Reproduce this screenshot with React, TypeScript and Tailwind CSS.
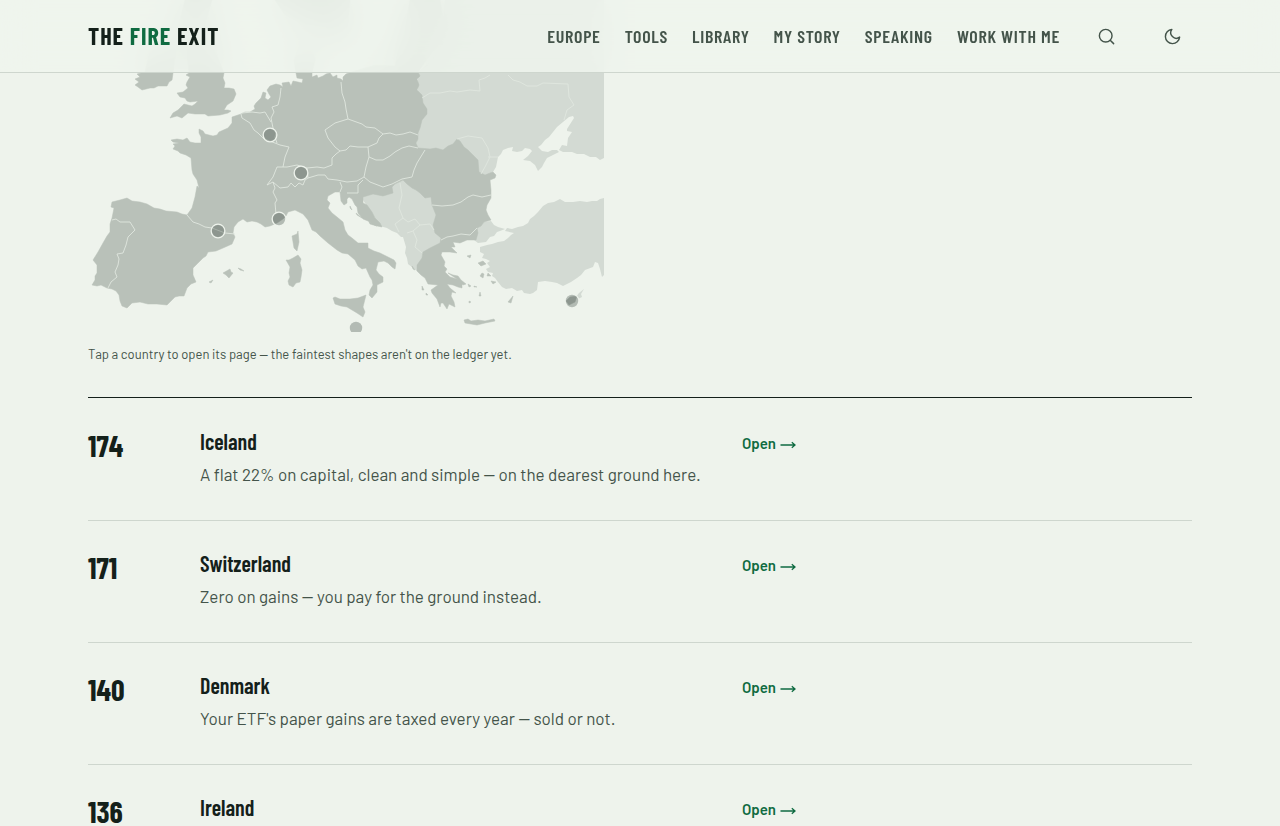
import { useState } from "react";
import { Search } from "lucide-react";

const navLinks = ["Europe", "Tools", "Library", "My story", "Speaking", "Work with me"];

const countries: { score: number; name: string; note?: string }[] = [
  { score: 174, name: "Iceland", note: "A flat 22% on capital, clean and simple — on the dearest ground here." },
  { score: 171, name: "Switzerland", note: "Zero on gains — you pay for the ground instead." },
  { score: 140, name: "Denmark", note: "Your ETF's paper gains are taxed every year — sold or not." },
  { score: 136, name: "Ireland" },
];

// countries that are not on the ledger
const faintLand = [
  "M418 73 440 50 445 0H604V158L600 160 596 157 590 157 584 154 577 154 572 152 568 152 563 152 559 150 562 145 567 146 568 138 572 132 567 131 567 129 574 118 573 116 569 117 563 122 557 127 553 132 549 137 545 140 541 145 538 147 542 151 548 152 552 150 557 150 559 152 553 155 547 158 544 163 542 167 538 171 535 165 530 161 523 160 528 156 532 151 530 149 525 148 522 151 517 152 512 151 513 147 508 148 503 150 501 154 498 157 496 167 493 172 480 178 416 153Z",
  "M358 197 363 200 380 226 387 228 392 231 397 233 401 237 403 237 406 247 405 253 407 258 408 264 412 267 417 271 425 262 445 245 445 200 405 178 385 190Z",
  "M484 222 491 221 494 225 498 227 505 229 500 231 497 232 494 236 490 237 486 242 478 243 474 240 476 225Z",
  "M480 247 487 245 492 244 498 242 504 241 508 238 511 235 514 233 505 231 507 228 512 229 518 227 523 226 528 223 530 219 534 216 538 212 543 206 548 203 554 202 560 199 565 202 573 202 580 201 587 202 592 201 597 201 600 199 604 198V275L602 277 600 269 598 263 595 262 593 267 585 270 581 275 577 278 571 282 563 286 557 283 552 282 545 281 538 282 537 290 533 293 530 294 524 293 522 290 517 291 512 288 506 289 502 287 498 282 495 278 492 276 493 273 488 272 486 269 490 267 487 263 490 261 486 259 482 258 484 254 480 252Z",
  "M576 297 579 293 584 289 581 294 582 297 578 299Z",
];

const land = [
  // mainland, clockwise from Brittany
  "M171 140 177 139 183 140 187 138 190 142 195 143 201 143 201 137 199 133 199 129 203 131 205 134 213 136 217 135 219 132 228 128 232 123 232 117 241 114 245 112 250 112 255 109 254 106 256 103 261 98 263 92 266 93 265 98 268 100 271 97 269 94 267 90 270 86 276 84 280 85 283 87 282 83 289 82 291 86 293 81 298 82 302 83 303 79 297 78 296 73 294 60 300 45 312 40 315 60 312 73 312 77 317 75 318 78 323 76 326 74 330 73 333 77 337 75 337 78 341 79 343 81 343 77 346 74 355 71 375 65 395 66 398 50 405 30 410 0 440 0 445 30 430 55 418 72 420 76 417 79 419 85 417 90 422 95 423 103 427 109 427 114 422 120 420 128 418 133 418 139 416 143 418 148 430 149 436 148 443 150 448 146 453 144 457 139 460 141 464 147 468 150 473 155 478 160 479 172 485 175 490 173 493 172 496 175 495 178 490 180 491 190 491 198 487 205 486 210 488 215 491 220 484 222 481 226 477 228 478 233 476 240 467 240 460 243 453 242 455 247 451 247 457 253 450 252 442 252 441 255 445 262 444 266 447 269 445 272 450 277 457 279 462 282 462 288 458 287 453 285 447 284 450 288 456 293 452 292 451 296 454 302 455 307 449 304 447 309 443 303 441 303 440 307 437 299 432 293 431 290 438 285 428 284 425 278 421 275 417 271 417 265 422 258 423 252 430 248 440 243 441 238 435 233 433 225 436 215 434 210 432 205 431 197 425 198 420 193 416 190 412 188 407 184 403 180 399 182 395 184 392 187 393 193 383 196 373 194 363 197 363 203 367 205 372 212 375 218 380 223 382 227 377 226 372 224 368 221 363 219 358 213 357 207 355 205 352 199 349 197 347 199 347 203 344 205 341 201 340 192 335 192 328 196 327 200 330 203 328 208 332 213 337 217 343 222 345 230 348 235 352 238 358 243 368 243 368 248 374 251 380 253 390 258 394 260 396 263 395 269 392 267 388 263 384 261 378 262 376 270 379 274 383 277 383 282 377 285 377 292 372 298 369 295 370 290 373 285 372 280 370 277 366 268 362 269 358 266 355 260 348 254 342 253 337 250 328 243 320 236 316 232 312 230 308 220 303 214 295 210 288 212 286 216 283 219 277 223 270 226 265 227 261 224 257 222 252 221 247 222 243 219 238 222 234 227 233 233 235 237 232 244 223 248 216 251 208 252 206 256 203 258 198 263 193 268 193 275 196 282 191 284 187 288 184 296 179 296 175 297 171 301 167 305 157 304 148 304 140 302 132 303 127 308 122 306 120 301 119 295 116 291 112 289 107 288 101 285 97 286 92 285 95 280 95 276 97 273 97 265 93 260 98 252 103 243 107 236 110 232 110 224 112 218 114 208 111 207 112 202 120 200 127 198 132 201 140 202 147 204 154 208 160 209 166 211 177 212 182 214 187 215 192 208 195 197 197 186 199 188 197 180 193 174 192 170 191 158 186 155 180 153 178 151 173 149 175 146 173 144 179 143 173 142Z",
  "M173 73 172 80 169 82 167 86 158 86 154 88 150 88 142 90 138 87 135 85 139 82 135 79 140 77 137 74 145 72 150 50 163 40 176 50Z",
  "M189 73 186 75 190 77 187 82 186 85 188 88 183 92 177 93 180 97 185 98 187 101 190 102 198 101 195 104 192 106 184 104 178 110 173 113 170 118 177 116 182 118 188 113 195 114 205 114 208 116 220 115 228 113 231 111 228 110 224 110 227 105 233 101 236 94 234 89 229 88 224 88 225 83 223 78 224 73 215 50 205 25 212 0 185 0 180 20 186 45Z",
  "M275 0H350L348 25 342 45 335 40 325 25 305 25 285 15Z",
  "M333 298 335 297 340 299 350 299 358 298 366 295 363 307 365 312 363 317 357 313 347 307 341 306 335 304Z",
  "M286 260 289 260 293 258 298 255 301 259 300 263 302 270 301 277 300 282 296 283 293 287 289 285 288 281 290 277 289 273 290 267Z",
  "M292 236 297 234 298 231 299 242 297 251 294 248Z",
  "M223 273 230 269 231 272 233 273 229 278 226 275ZM238 268 241 269 244 271 240 270ZM209 282 213 280 211 283Z",
  "M464 320 468 319 471 321 478 320 485 321 494 319 495 321 485 323 477 325 465 323Z",
  "M448 273 453 275 458 276 461 280 466 284 463 285 457 279Z",
  "M478 263 483 261 486 264 481 266ZM482 273 484 274 483 278 480 276ZM491 281 496 282 493 284ZM508 302 513 296 511 303ZM467 256 471 255 470 258ZM488 273 491 276 487 276ZM412 266 415 270 413 269ZM422 286 424 290 422 290ZM426 293 428 295 426 295ZM468 284 471 286 469 287ZM474 286 477 287 474 287ZM480 292 481 296 479 296ZM469 301 471 302 469 303Z",
  "M566 301 570 297 577 296 575 302 569 305Z",
  "M350 206 352 210 350 208ZM356 213 362 218 357 215ZM369 222 377 226 370 224Z",
];

const borders = [
  "M112 220 116 219 120 222 130 222 135 230 128 237 126 245 123 253 117 254 119 259 118 265 115 272 117 277 111 282 108 288",
  "M187 215 193 222 199 224 205 227 212 228 225 233 235 234",
  "M241 114 242 118 250 123 254 130 258 133 260 135 264 139 275 143 280 145 289 147 285 157 283 167",
  "M242 113 252 112 260 113 265 112 268 117 271 122",
  "M281 88 280 97 278 105 272 107 274 112 271 118 273 128 276 133 275 137 277 143",
  "M341 82 342 93 345 102 346 109 348 119 335 123 325 130 328 138 335 147 340 151 346 150 350 146 358 147 368 147 377 143 379 138 383 134 375 128 366 127 362 124 348 119",
  "M383 134 390 133 396 135 403 134 410 132 418 135M368 147 369 157 376 160 383 160 390 156 395 152 402 148 409 146 418 148",
  "M369 157 366 167 364 177 370 182 383 187 392 184 402 179 412 177 414 170 417 163 425 150",
  "M340 151 336 154 332 158 332 165 324 168 317 167 307 168 308 178 318 175 325 175 328 179 337 180 347 182 357 181 364 177",
  "M273 177 277 167 287 167 297 165 307 168M308 178 305 180 303 185 299 183 295 187 291 183 288 187 280 188 273 182 267 185 273 177M273 182 275 188 273 192 277 200 275 203 276 214",
  "M340 182 342 187 340 192M363 180 358 185 358 193 347 193",
  "M432 205 442 206 453 205 461 202 468 197 473 195 482 197 491 195",
  "M441 240 447 237 453 236 461 234 470 235 477 228",
  "M422 98 430 93 440 93 450 91 457 92 470 90 480 91 479 80 485 78 490 75 M508 75 513 80 520 82 527 86 537 86 543 83 568 84 569 97 574 105 567 110 564 120",
  "M457 139 468 136 482 138 488 148 490 157 485 167 481 174M488 157 498 157",
  "M400 183 402 195 399 208 403 218 395 224 399 232M403 218 408 222 415 219 420 225 413 231 407 233M420 225 430 224 434 230M413 231 417 240 415 247 422 253",
];

const dots = [
  { name: "Luxembourg", cx: 270, cy: 135 },
  { name: "Liechtenstein", cx: 301, cy: 173 },
  { name: "Andorra", cx: 218, cy: 231 },
  { name: "Monaco", cx: 279, cy: 219 },
  { name: "Malta", cx: 356, cy: 328 },
  { name: "Cyprus", cx: 572, cy: 301 },
];

function EuropeMap() {
  return (
    <svg viewBox="88 0 516 332" className="block w-full max-w-[516px]" role="img" aria-label="Map of Europe">
      <g fill="#d3dad3">
        {faintLand.map((d) => (
          <path key={d} d={d} />
        ))}
      </g>
      <g fill="#b9c1b9" stroke="#b9c1b9" strokeWidth="0.5" strokeLinejoin="round">
        {land.map((d) => (
          <path key={d} d={d} />
        ))}
      </g>
      <g fill="none" stroke="#e0e7df" strokeWidth="0.9" strokeLinejoin="round">
        {borders.map((d) => (
          <path key={d} d={d} />
        ))}
      </g>
      {dots.map((dot) => (
        <g key={dot.name}>
          <circle cx={dot.cx} cy={dot.cy} r="6.8" fill="none" stroke="#eef3ec" strokeWidth="1.4" />
          <circle cx={dot.cx} cy={dot.cy} r="6.2" fill="#16241c" fillOpacity="0.27" />
        </g>
      ))}
    </svg>
  );
}

function MoonIcon() {
  return (
    <svg width="19" height="19" viewBox="0 0 24 24" fill="none" stroke="currentColor" strokeWidth="1.8" strokeLinecap="round" strokeLinejoin="round">
      <path d="M21 12.79A9 9 0 1 1 11.21 3 7 7 0 0 0 21 12.79z" />
    </svg>
  );
}

function ArrowIcon() {
  return (
    <svg width="16" height="8" viewBox="0 0 16 8" fill="none" stroke="currentColor" strokeWidth="1.3" className="mt-[3px]" aria-hidden="true">
      <path d="M0.5 4H15M11.8 1.2 15 4 11.8 6.8" />
    </svg>
  );
}

function Header() {
  const [dark, setDark] = useState(false);

  return (
    <header className="sticky top-0 z-10 border-b border-[#ced6ce] bg-[#eff5ed]/85 backdrop-blur-lg">
      <div className="mx-auto flex h-18 max-w-[1152px] items-center justify-between px-6">
        <a href="#" className="font-['Barlow_Condensed','Liberation_Sans_Narrow',Roboto,sans-serif] text-2xl font-bold tracking-[0.04em] text-[#14201a]">
          THE <span className="text-[#0f6b41]">FIRE</span> EXIT
        </a>
        <div className="flex items-center">
          <nav className="flex gap-6 font-['Barlow_Condensed','Liberation_Sans_Narrow',Roboto,sans-serif] text-lg font-semibold tracking-[0.04em] text-[#44544a] uppercase">
            {navLinks.map((label) => (
              <a key={label} href="#">
                {label}
              </a>
            ))}
          </nav>
          <div className="ml-6 flex items-center gap-6 text-[#44544a]">
            <button type="button" aria-label="Search" className="grid size-11 place-items-center">
              <Search size={19} strokeWidth={1.8} />
            </button>
            <button type="button" aria-label="Toggle dark mode" aria-pressed={dark} onClick={() => setDark(!dark)} className="grid size-10 place-items-center">
              <MoonIcon />
            </button>
          </div>
        </div>
      </div>
    </header>
  );
}

export default function App() {
  return (
    <div className="min-h-screen bg-[#eef3ec] font-['Barlow','Roboto',sans-serif] text-[#44544a]">
      <Header />
      <main className="mx-auto -mt-[73px] max-w-[1152px] px-6">
        <EuropeMap />
        <p className="mt-3 mb-[33px] text-[13px] leading-5">
          Tap a country to open its page — the faintest shapes aren't on the ledger yet.
        </p>
        <ol className="border-t border-[#14201a] pt-px">
          {countries.map((c) => (
            <li key={c.name} className="grid grid-cols-[80px_510px_auto] items-start gap-x-8 border-b border-[#ced6ce] pt-[26px] pb-[33px]">
              <span className="font-['Barlow_Condensed','Liberation_Sans_Narrow',Roboto,sans-serif] text-3xl leading-10 font-bold text-[#14201a]">{c.score}</span>
              <div>
                <h3 className="mb-1 font-['Barlow_Condensed','Liberation_Sans_Narrow',Roboto,sans-serif] text-[22px] leading-8 font-semibold text-[#14201a]">{c.name}</h3>
                {c.note && <p className="text-[17px] leading-[26px]">{c.note}</p>}
              </div>
              <a href="#" className="flex items-center gap-1 justify-self-start text-[15px] leading-9 font-semibold text-[#0f6b41]">
                Open
                <ArrowIcon />
              </a>
            </li>
          ))}
        </ol>
      </main>
    </div>
  );
}
